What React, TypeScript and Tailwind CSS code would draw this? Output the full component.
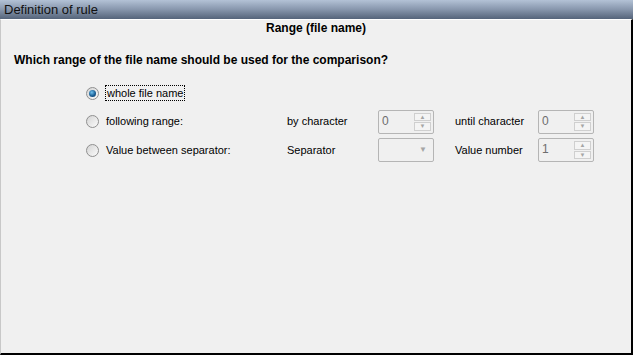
const Radio = ({ checked }: { checked?: boolean }) => (
  <span className="relative flex h-[13px] w-[13px] shrink-0 items-center justify-center rounded-full border border-[#8f8f8f] bg-gradient-to-br from-[#d4d4d4] to-[#fbfbfb]">
    {checked && (
      <span className="h-[7px] w-[7px] rounded-full bg-[radial-gradient(circle_at_40%_35%,#6fc0ee,#1a5f95_55%,#0c3560)]" />
    )}
  </span>
);

const Spinner = ({ value }: { value: string }) => (
  <div className="flex h-[24px] w-[56px] items-stretch rounded-[2px] border border-[#b5b5b5] bg-[#f0f0f0] p-[2px]">
    <span className="flex-1 pl-[1px] text-[12px] leading-[16px] text-[#6d6d6d]">{value}</span>
    <div className="flex w-[17px] flex-col gap-[1px]">
      <span className="flex flex-1 items-center justify-center border border-[#cfcfcf] bg-[#f4f4f4] text-[6px] leading-none text-[#a5a5a5]">
        ▲
      </span>
      <span className="flex flex-1 items-center justify-center border border-[#cfcfcf] bg-[#f4f4f4] text-[6px] leading-none text-[#a5a5a5]">
        ▼
      </span>
    </div>
  </div>
);

const Combo = () => (
  <div className="flex h-[24px] w-[56px] items-center justify-end rounded-[2px] border border-[#b5b5b5] bg-[#f0f0f0] pr-[6px]">
    <span className="text-[8px] leading-none text-[#a5a5a5]">▼</span>
  </div>
);

export default function App() {
  return (
    <div className="flex h-[355px] w-[633px] flex-col bg-[#f0f0f0] font-['Liberation_Sans',Arial,sans-serif] text-[11px] text-black">
      <div className="flex h-[19px] shrink-0 items-center bg-gradient-to-b from-[#b3c2d6] via-[#8796ac] to-[#55647a] pl-[4px] text-[13px] text-[#111]">
        Definition of rule
      </div>
      <div className="flex flex-1 flex-col border-t border-l border-t-white border-l-[#c8c8c8] border-r-2 border-b-2 border-r-black border-b-black">
        <div className="mt-[1px] text-center text-[12px] font-bold leading-[14px]">
          Range (file name)
        </div>
        <div className="mt-[18px] pl-[13px] text-[12px] font-bold leading-[14px]">
          Which range of the file name should be used for the comparison?
        </div>
        <div className="mt-[12px] flex flex-col pl-[85px]">
          <div className="flex h-[28px] items-center">
            <div className="flex w-[201px] items-center gap-[6px]">
              <Radio checked />
              <span className="border border-dotted border-black px-[1px] leading-[14px]">
                whole file name
              </span>
            </div>
          </div>
          <div className="flex h-[29px] items-center">
            <div className="flex w-[201px] items-center gap-[7px]">
              <Radio />
              <span>following range:</span>
            </div>
            <span className="w-[91px]">by character</span>
            <Spinner value="0" />
            <span className="ml-[21px] w-[83px]">until character</span>
            <Spinner value="0" />
          </div>
          <div className="flex h-[28px] items-center">
            <div className="flex w-[201px] items-center gap-[7px]">
              <Radio />
              <span>Value between separator:</span>
            </div>
            <span className="w-[91px]">Separator</span>
            <Combo />
            <span className="ml-[21px] w-[83px]">Value number</span>
            <Spinner value="1" />
          </div>
        </div>
      </div>
    </div>
  );
}
